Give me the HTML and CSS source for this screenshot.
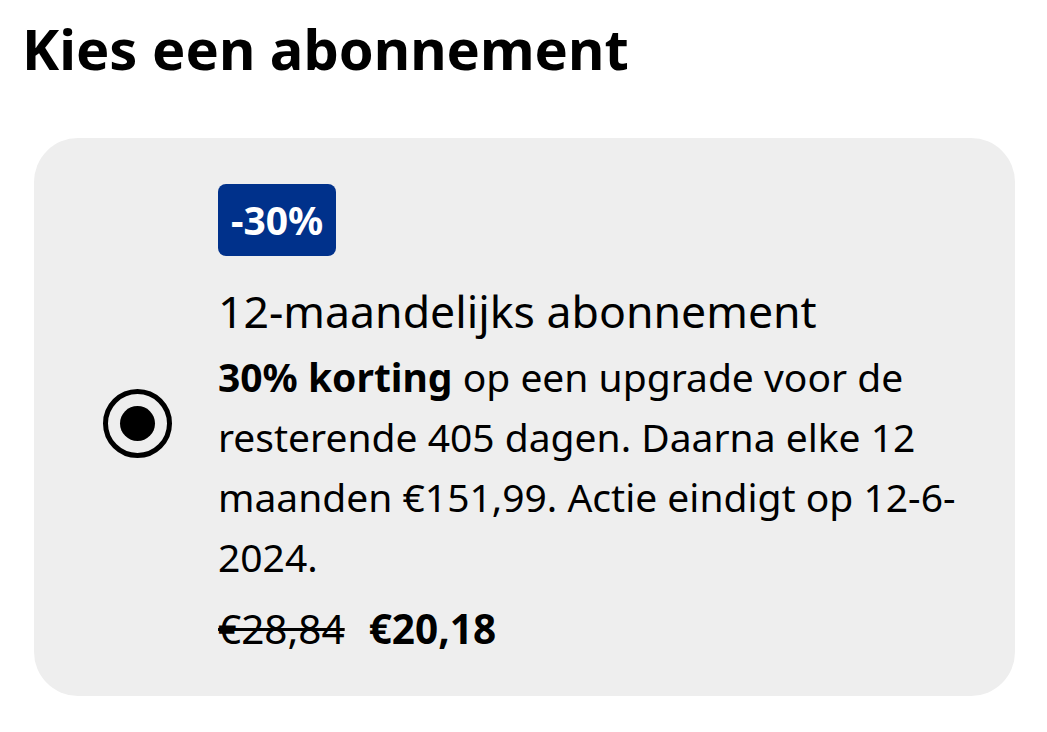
FILE: index.html
```html
<!DOCTYPE html>
<html lang="nl">
<head>
<meta charset="utf-8">
<link rel="stylesheet" href="styles.css">
</head>
<body>
<main class="page">
  <h1 class="title">Kies een abonnement</h1>
  <div class="card">
    <div class="radio-col">
      <span class="radio"><span class="radio-dot"></span></span>
    </div>
    <div class="content">
      <span class="badge">-30%</span>
      <div class="plan-name">12-maandelijks abonnement</div>
      <p class="desc"><strong>30% korting</strong> op een upgrade voor de resterende 405 dagen. Daarna elke 12 maanden €151,99. Actie eindigt op 12-6-2024.</p>
      <div class="prices">
        <span class="old-price">€28,84</span>
        <span class="new-price">€20,18</span>
      </div>
    </div>
  </div>
</main>
</body>
</html>
```
FILE: styles.css
```css
html, body {
  margin: 0;
  padding: 0;
  background: #ffffff;
}
body {
  font-family: "Noto Sans", "Open Sans", sans-serif;
  color: #000000;
}
.page {
  padding: 15px 32px 0 22px;
}
.title {
  margin: 0;
  font-size: 56px;
  font-weight: 700;
  line-height: 67px;
}
.card {
  margin: 56px 0 0 12px;
  width: 981px;
  height: 558px;
  box-sizing: border-box;
  background: #eeeeee;
  border-radius: 44px;
  display: flex;
  align-items: center;
  padding: 46px 40px 34px 69px;
}
.radio-col {
  flex: 0 0 auto;
  margin-right: 46px;
}
.radio {
  width: 69px;
  height: 69px;
  box-sizing: border-box;
  border: 5px solid #000;
  border-radius: 50%;
  display: flex;
  align-items: center;
  justify-content: center;
}
.radio-dot {
  width: 35px;
  height: 35px;
  border-radius: 50%;
  background: #000;
}
.content {
  flex: 1 1 auto;
  align-self: flex-start;
  display: flex;
  flex-direction: column;
  align-items: flex-start;
}
.badge {
  display: inline-block;
  background: #00318b;
  color: #ffffff;
  font-weight: 700;
  font-size: 39px;
  line-height: 72px;
  height: 72px;
  padding: 0 13px;
  border-radius: 8px;
}
.plan-name {
  margin-top: 25px;
  font-size: 44.6px;
  line-height: 60px;
}
.desc {
  margin: 6px 0 0;
  font-size: 39px;
  line-height: 60px;
}
.desc strong {
  font-weight: 700;
}
.prices {
  margin-top: 12px;
  font-size: 40.5px;
  line-height: 60px;
  display: flex;
  gap: 24px;
}
.old-price {
  text-decoration: line-through;
  text-decoration-thickness: 3px;
}
.new-price {
  font-weight: 700;
}
```
